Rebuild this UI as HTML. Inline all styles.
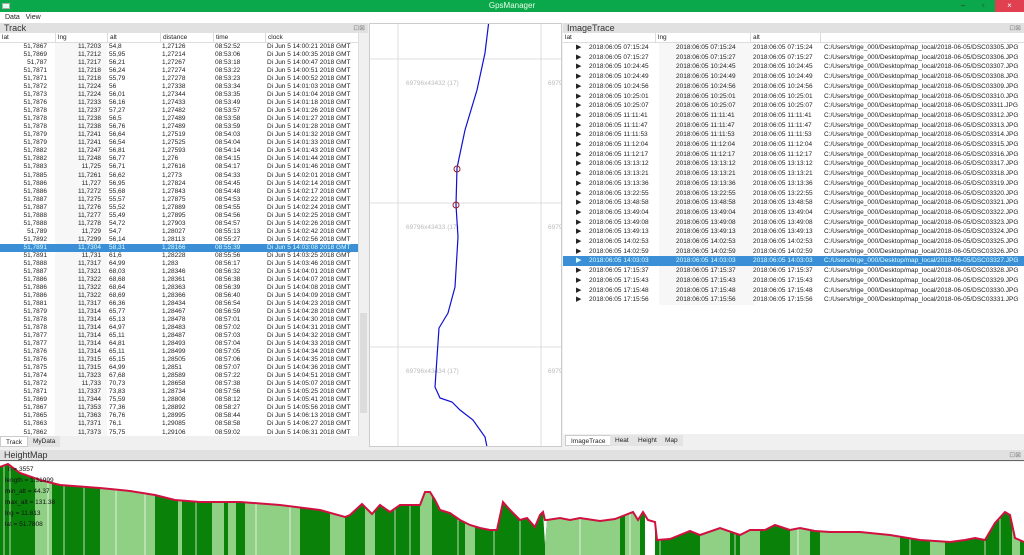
<!DOCTYPE html>
<html><head><meta charset="utf-8"><style>
*{margin:0;padding:0;box-sizing:border-box}
body{width:1024px;height:555px;overflow:hidden;background:#f0f0f0;font-family:"Liberation Sans",sans-serif;font-size:6.5px;color:#222;position:relative}
.a{position:absolute}
.tb{left:0;top:0;width:1024px;height:12px;background:#0aa84a;color:#e8ffe8;font-size:8px;text-align:center;line-height:12px}
.menu{top:12px;left:0;width:1024px;height:11px;background:#fff;font-size:7px;line-height:11px;padding-left:5px}
.dt{background:#e1e1e1;font-size:9px;line-height:10px;padding-left:4px;color:#333}
table{border-collapse:collapse;table-layout:fixed}
td{height:8.04px;line-height:8px;white-space:nowrap;overflow:hidden;padding:0 2px;font-size:6.5px}
.hd{background:#fff;border-bottom:1px solid #ddd;font-size:6.5px;line-height:9px}
.hd span{position:absolute;top:0;border-left:1px solid #ddd;padding-left:2px;height:9px}
.sel td{background:#3a8fd6;color:#dff}
.tab{font-size:6.5px;line-height:11px;padding:0 5px;position:absolute;top:0;height:11px}
</style></head><body>
<div class="a tb">GpsManager
<span class="a" style="left:2px;top:3px;width:8px;height:6px;background:#dfe;border:1px solid #aaa"></span>
<span class="a" style="left:958px;top:0;width:10px;color:#333">–</span>
<span class="a" style="left:978px;top:0;width:10px;color:#333">▫</span>
<span class="a" style="left:995px;top:0;width:29px;height:12px;background:#e04050;color:#fff">×</span></div>
<div class="a menu">Data &nbsp; View</div>

<div class="a dt" style="left:0;top:23px;width:368px;height:10px">Track<span class="a" style="right:3px;top:1px;font-size:7px;color:#888">⊡⊠</span></div>
<div class="a" style="left:0;top:33px;width:368px;height:404px;background:#fff;overflow:hidden">
<div class="a hd" style="left:0;top:0;width:358px;height:10px"><span style="left:0;border:0">lat</span><span style="left:55px">lng</span><span style="left:107px">alt</span><span style="left:160px">distance</span><span style="left:213px">time</span><span style="left:265px">clock</span></div>
<div class="a" style="left:55px;top:10px;width:52px;height:394px;background:#f7f7f7"></div>
<table class="a" style="left:0;top:10px;width:358px" id="tt">
<colgroup><col style="width:55px"><col style="width:52px"><col style="width:53px"><col style="width:53px"><col style="width:52px"><col style="width:93px"></colgroup>
<tbody id="tb"></tbody></table>
<div class="a" style="left:358px;top:0;width:10px;height:404px;background:#f0f0f0;border-left:1px solid #ddd"><div class="a" style="left:1px;top:280px;width:7px;height:100px;background:#dcdcdc"></div></div>
</div>
<div class="a" style="left:0;top:436px;width:368px;height:12px;background:#f0f0f0">
<span class="tab" style="left:0;background:#fff;border:1px solid #ccc">Track</span><span class="tab" style="left:28px;background:#e4e4e4">MyData</span></div>

<div class="a" style="left:369px;top:23px;width:193px;height:424px;background:#fff;border:1px solid #ccc;overflow:hidden">
<svg width="193" height="424" viewBox="369 23 193 424" style="position:absolute;left:-1px;top:-1px">
<g stroke="#d4d4d4" stroke-width="0.8"><line x1="398" y1="23" x2="398" y2="447"/><line x1="541" y1="23" x2="541" y2="447"/><line x1="369" y1="59" x2="562" y2="59"/><line x1="369" y1="203" x2="562" y2="203"/><line x1="369" y1="347" x2="562" y2="347"/></g>
<g fill="#bbb" font-size="6.5" font-family="Liberation Sans"><text x="406" y="85">69796x43432 (17)</text><text x="548" y="85">6979</text><text x="406" y="229">69796x43433 (17)</text><text x="548" y="229">6979</text><text x="406" y="373">69796x43434 (17)</text><text x="548" y="373">6979</text></g>
<polyline fill="none" stroke="#1010d0" stroke-width="1.2" points="489,20 485,53 477,90 465,130 457,168 456,205 458,237 455,287 448,313 439,328 435,387 440,398 452,402 460,410 473,420 485,437 487,447"/>
<g fill="none" stroke="#a02020" stroke-width="1"><circle cx="457" cy="169" r="3"/><circle cx="456" cy="205" r="3"/></g>
</svg></div>

<div class="a dt" style="left:563px;top:23px;width:461px;height:10px">ImageTrace<span class="a" style="right:3px;top:1px;font-size:7px;color:#888">⊡⊠</span></div>
<div class="a" style="left:563px;top:33px;width:461px;height:401px;background:#fff;overflow:hidden">
<div class="a hd" style="left:0;top:0;width:461px;height:10px"><span style="left:0;border:0">lat</span><span style="left:92px">lng</span><span style="left:187px">alt</span><span style="left:257px"></span></div>
<div class="a" style="left:96px;top:10px;width:95px;height:262px;background:#f7f7f7"></div>
<div id="it"></div>
</div>
<div class="a" style="left:563px;top:434px;width:461px;height:13px;background:#f0f0f0">
<span class="tab" style="left:2px;top:1px;background:#fff;border:1px solid #ccc">ImageTrace</span><span class="tab" style="left:47px;top:1px;background:#e4e4e4">Heat</span><span class="tab" style="left:70px;top:1px;background:#e4e4e4">Height</span><span class="tab" style="left:97px;top:1px;background:#e4e4e4">Map</span></div>

<div class="a dt" style="left:0;top:450px;width:1024px;height:11px;border-bottom:1px solid #666">HeightMap<span class="a" style="right:3px;top:1px;font-size:7px;color:#888">⊡⊠</span></div>
<svg class="a" style="left:0;top:462px" width="1024" height="93" viewBox="0 462 1024 93" preserveAspectRatio="none">
<rect x="0" y="462" width="1024" height="93" fill="#fff"/>
<defs><clipPath id="c" clipPathUnits="userSpaceOnUse"><polygon points="0,555 0,467 8,464 20,473 40,480 60,485 100,488 130,491 155,495 175,500 200,502 240,502 280,505 320,510 345,517 350,515 362,504 372,514 380,505 390,512 400,505 412,505 420,505 425,492 430,492 435,500 440,510 450,513 460,520 470,525 480,528 490,530 497,530 503,502 510,510 520,520 527,518 535,527 540,515 543,512 545,545 547,520 560,518 570,520 580,518 600,521 615,519 633,512 638,520 643,512 648,520 655,522 657,540 670,539 690,531 700,535 720,528 740,535 750,530 765,530 775,525 790,530 800,528 815,531 830,532 860,532 890,535 920,540 950,542 965,540 975,538 985,540 995,523 1005,512 1010,515 1015,538 1024,542 1024,555"/></clipPath></defs>
<g clip-path="url(#c)">
<rect x="0" y="462" width="1024" height="93" fill="#0a820a"/>
<g fill="#8fd085">
<rect x="35" y="462" width="17" height="93"/><rect x="100" y="462" width="55" height="93"/><rect x="178" y="462" width="4" height="93"/><rect x="212" y="462" width="12" height="93"/><rect x="228" y="462" width="8" height="93"/><rect x="245" y="462" width="55" height="93"/><rect x="330" y="462" width="15" height="93"/><rect x="365" y="462" width="10" height="93"/><rect x="420" y="462" width="12" height="93"/><rect x="465" y="462" width="10" height="93"/><rect x="545" y="462" width="75" height="93"/><rect x="625" y="462" width="15" height="93"/><rect x="700" y="462" width="30" height="93"/><rect x="740" y="462" width="20" height="93"/><rect x="790" y="462" width="20" height="93"/><rect x="820" y="462" width="80" height="93"/><rect x="930" y="462" width="15" height="93"/><rect x="1012" y="462" width="8" height="93"/>
</g>
<g stroke="#fff" stroke-width="0.8" opacity="0.9">
<line x1="4" y1="462" x2="4" y2="555"/><line x1="10" y1="462" x2="10" y2="555"/><line x1="48" y1="462" x2="48" y2="555"/><line x1="64" y1="462" x2="64" y2="555"/><line x1="84" y1="462" x2="84" y2="555"/><line x1="116" y1="462" x2="116" y2="555"/><line x1="145" y1="462" x2="145" y2="555"/><line x1="196" y1="462" x2="196" y2="555"/><line x1="256" y1="462" x2="256" y2="555"/><line x1="290" y1="462" x2="290" y2="555"/><line x1="395" y1="462" x2="395" y2="555"/><line x1="410" y1="462" x2="410" y2="555"/><line x1="458" y1="462" x2="458" y2="555"/><line x1="494" y1="462" x2="494" y2="555"/><line x1="520" y1="462" x2="520" y2="555"/><line x1="580" y1="462" x2="580" y2="555"/><line x1="630" y1="462" x2="630" y2="555"/><line x1="660" y1="462" x2="660" y2="555"/><line x1="735" y1="462" x2="735" y2="555"/><line x1="798" y1="462" x2="798" y2="555"/><line x1="910" y1="462" x2="910" y2="555"/><line x1="985" y1="462" x2="985" y2="555"/><line x1="1000" y1="462" x2="1000" y2="555"/>
</g>
<rect x="645" y="462" width="10" height="93" fill="#fff"/>
</g>
<polyline fill="none" stroke="#d01040" stroke-width="2" points="0,467 8,464 20,473 40,480 60,485 100,488 130,491 155,495 175,500 200,502 240,502 280,505 320,510 345,517 350,515 362,504 372,514 380,505 390,512 400,505 412,505 420,505 425,492 430,492 435,500 440,510 450,513 460,520 470,525 480,528 490,530 497,530 503,502 510,510 520,520 527,518 535,527 540,515 543,512 545,520 547,520 560,518 570,520 580,518 600,521 615,519 633,512 638,520 643,512 648,520 655,522 657,540 670,539 690,531 700,535 720,528 740,535 750,530 765,530 775,525 790,530 800,528 815,531 830,532 860,532 890,535 920,540 950,542 965,540 975,538 985,540 995,523 1005,512 1010,515 1015,538 1024,542"/>
<g font-size="6.5" font-family="Liberation Sans" fill="#111"><text x="8" y="471">n = 3557</text><text x="5" y="482">length = 1.31999</text><text x="5" y="493">min_alt = 44.37</text><text x="5" y="504">max_alt = 131.38</text><text x="5" y="515">lng = 11.813</text><text x="5" y="526">lat = 51.7808</text></g>
</svg>

<script>
var T=`51,7867 11,7203 54,8 1,27126 08:52:52 14:00:21
51,7869 11,7212 55,95 1,27214 08:53:06 14:00:35
51,787 11,7217 56,21 1,27267 08:53:18 14:00:47
51,7871 11,7218 56,24 1,27274 08:53:22 14:00:51
51,7871 11,7218 55,79 1,27278 08:53:23 14:00:52
51,7872 11,7224 56 1,27338 08:53:34 14:01:03
51,7873 11,7224 56,01 1,27344 08:53:35 14:01:04
51,7876 11,7233 56,16 1,27433 08:53:49 14:01:18
51,7878 11,7237 57,27 1,27482 08:53:57 14:01:26
51,7878 11,7238 56,5 1,27489 08:53:58 14:01:27
51,7878 11,7238 56,76 1,27489 08:53:59 14:01:28
51,7879 11,7241 56,64 1,27519 08:54:03 14:01:32
51,7879 11,7241 56,54 1,27525 08:54:04 14:01:33
51,7882 11,7247 56,81 1,27593 08:54:14 14:01:43
51,7882 11,7248 56,77 1,276 08:54:15 14:01:44
51,7883 11,725 56,71 1,27616 08:54:17 14:01:46
51,7885 11,7261 56,62 1,2773 08:54:33 14:02:01
51,7886 11,727 56,95 1,27824 08:54:45 14:02:14
51,7886 11,7272 55,68 1,27843 08:54:48 14:02:17
51,7887 11,7275 55,57 1,27875 08:54:53 14:02:22
51,7887 11,7276 55,52 1,27889 08:54:55 14:02:24
51,7888 11,7277 55,49 1,27895 08:54:56 14:02:25
51,7888 11,7278 54,72 1,27903 08:54:57 14:02:26
51,789 11,729 54,7 1,28027 08:55:13 14:02:42
51,7892 11,7299 56,14 1,28113 08:55:27 14:02:56
51,7891 11,7304 58,31 1,28166 08:55:39 14:03:08
51,7891 11,731 61,6 1,28228 08:55:56 14:03:25
51,7888 11,7317 64,99 1,283 08:56:17 14:03:46
51,7887 11,7321 68,03 1,28346 08:56:32 14:04:01
51,7886 11,7322 68,68 1,28361 08:56:38 14:04:07
51,7886 11,7322 68,64 1,28363 08:56:39 14:04:08
51,7886 11,7322 68,69 1,28366 08:56:40 14:04:09
51,7881 11,7317 66,36 1,28434 08:56:54 14:04:23
51,7879 11,7314 65,77 1,28467 08:56:59 14:04:28
51,7878 11,7314 65,13 1,28478 08:57:01 14:04:30
51,7878 11,7314 64,97 1,28483 08:57:02 14:04:31
51,7877 11,7314 65,11 1,28487 08:57:03 14:04:32
51,7877 11,7314 64,81 1,28493 08:57:04 14:04:33
51,7876 11,7314 65,11 1,28499 08:57:05 14:04:34
51,7876 11,7315 65,15 1,28505 08:57:06 14:04:35
51,7875 11,7315 64,99 1,2851 08:57:07 14:04:36
51,7874 11,7323 67,68 1,28589 08:57:22 14:04:51
51,7872 11,733 70,73 1,28658 08:57:38 14:05:07
51,7871 11,7337 73,83 1,28734 08:57:56 14:05:25
51,7869 11,7344 75,59 1,28808 08:58:12 14:05:41
51,7867 11,7353 77,36 1,28892 08:58:27 14:05:56
51,7865 11,7363 76,76 1,28995 08:58:44 14:06:13
51,7863 11,7371 76,1 1,29085 08:58:58 14:06:27
51,7862 11,7373 75,75 1,29106 08:59:02 14:06:31`.split("\n");
var h="";T.forEach(function(l,i){var c=l.split(" ");h+='<tr'+(i==25?' class="sel"':'')+'><td style="text-align:right;padding-right:8px">'+c[0]+'</td><td style="text-align:right;padding-right:6px">'+c[1]+'</td><td>'+c[2]+'</td><td>'+c[3]+'</td><td>'+c[4]+'</td><td>Di Jun 5 '+c[5]+' 2018 GMT</td></tr>';});
document.getElementById("tb").innerHTML=h;
var I="07:15:24 07:15:27 10:24:45 10:24:49 10:24:56 10:25:01 10:25:07 11:11:41 11:11:47 11:11:53 11:12:04 11:12:17 13:13:12 13:13:21 13:13:36 13:22:55 13:48:58 13:49:04 13:49:08 13:49:13 14:02:53 14:02:59 14:03:03 17:15:37 17:15:43 17:15:48 17:15:56".split(" ");
var g="";I.forEach(function(t,i){var y=10+i*9.7,s=i==22;var d="2018:06:05 "+t;
g+='<div class="a" style="left:0;top:'+y+'px;width:461px;height:9.7px;line-height:9.7px;'+(s?'background:#3a8fd6;color:#dff;':'')+'"><span class="a" style="left:13px;font-size:7px">▶</span><span class="a" style="left:26px">'+d+'</span><span class="a" style="left:113px">'+d+'</span><span class="a" style="left:190px">'+d+'</span><span class="a" style="left:261px">C:/Users/trige_000/Desktop/map_local/2018-06-05/DSC033'+(5+i<10?'0':'')+(5+i)+'.JPG</span></div>';});
document.getElementById("it").innerHTML=g;
</script>
</body></html>
